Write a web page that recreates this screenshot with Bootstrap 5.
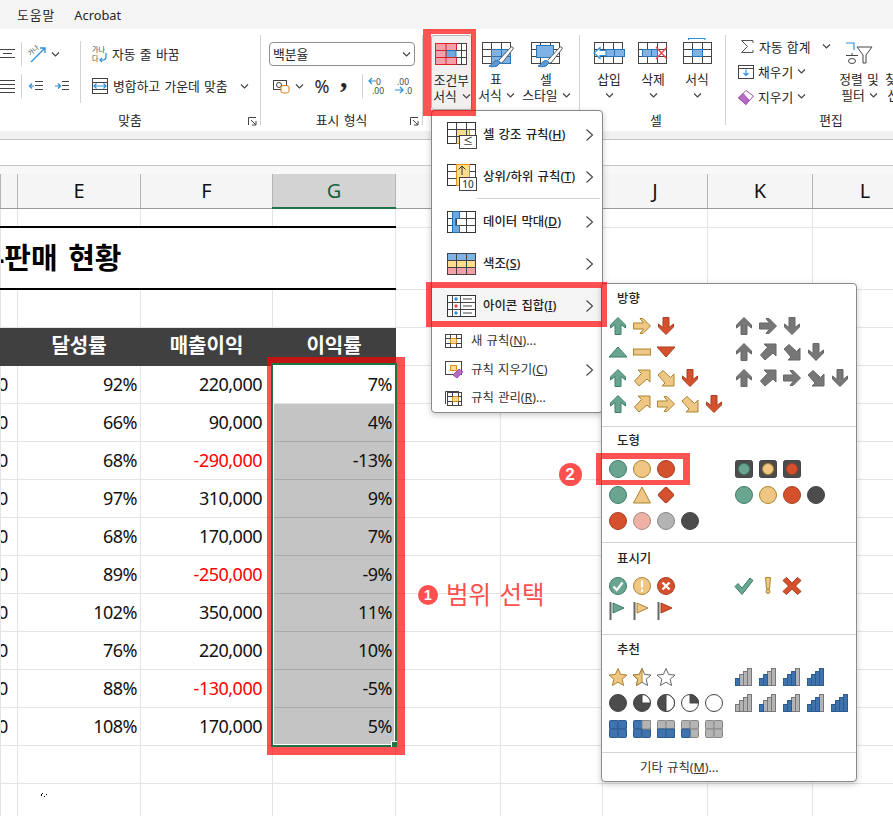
<!DOCTYPE html>
<html lang="ko">
<head>
<meta charset="utf-8">
<title>조건부 서식</title>
<link href="https://cdn.jsdelivr.net/npm/bootstrap@5.3.0/dist/css/bootstrap.min.css" rel="stylesheet">
<style>
html,body{margin:0;background:#fff}
body{font-family:"Noto Sans","Noto Sans CJK KR",sans-serif;font-size:12.8px;color:#262626;word-spacing:1px;line-height:16px}
.pg{width:893px;height:816px;overflow:hidden}
.defs{position:absolute;width:0;height:0}
svg{display:block;overflow:visible;flex:none}
.tabs{height:29px;background:#f5f5f5;padding-left:17px;gap:19px}
.tabk{letter-spacing:1px}
.rib{height:102px;background:#fff;padding-top:6px;overflow:hidden}
.rg{height:90px;border-right:1px solid #d2d2d2;flex:none}
.rg1{width:341px;margin-left:-80px;padding-left:80px}
.rg2{width:162px}.rg3{width:157px;padding-left:8px}.rg4{width:146px;padding-left:7px}.rg5{width:210px;border:0;padding-left:12px}
.rbody{flex:1 1 auto;min-height:0}
.rlab{height:13px;flex:none;padding-top:4px;box-sizing:content-box}
.lab5{width:210px;margin-left:-12px}
.lnch{right:3px;top:9px}
.lft{width:81px;border-right:1px solid #d2d2d2;height:62px;margin-top:6px;padding-bottom:4px;gap:6px}
.lrow{height:26px}
.cella{width:22px;height:24px;border-right:1px solid #d2d2d2;overflow:hidden}
.rgt{padding-left:11px;height:62px;margin-top:6px;gap:6px}
.big{height:75px;padding-top:3px;line-height:16px}
.bicon{height:33px}
.bw41{width:41px}.bw48{width:48px}.bw52{width:52px}.bw44{width:44px}.bw46{width:46px}
.cfb{background:#f0f0f0;border:1px solid #b5b5b5;border-radius:3px}
.chr{margin-left:5px}
.cg1{margin-left:6px}
.cg2{margin-left:5px}
.cg3{margin-left:7px}
.cg4{margin-left:12px}
.cg7{margin-left:13px}
.cg6{margin-left:6px}
.chd{margin-top:6px}
.ed1{width:98px;height:75px;flex:none;margin-top:-1px}
.edrow{height:25.5px}
.sig{margin:0 5px 0 3px}
.edi{margin-right:4px}
.combo{width:146px;height:24px;margin:7px 0 0 8px;border:1px solid #8f8f8f;border-radius:4px;padding:0 4px 0 3px}
.fmt{margin:4px 0 0 12px;height:32px}
.pct{font-size:18px;margin-left:7px;width:24px;text-align:center}
.cmm{font-size:30px;font-weight:700;width:16px;height:32px;line-height:14px;font-family:"Liberation Serif",serif;margin:0 6px}
.vsep{width:1px;height:24px;background:#d2d2d2;margin-right:6px}
.fbar{height:26px;background:#fff;border-bottom:1px solid #c8c8c8}
.fshade{height:9px;background:#f1f1f1;border-bottom:1px solid #c4c4c4}
.strip{height:8px;background:#f8f8f8}
.xl{table-layout:fixed;border-collapse:collapse;width:917px;font-size:18px;letter-spacing:-.5px;color:#111;word-spacing:0}
.cw17{width:17px}.cw123{width:123px}.cw132{width:132px}.cw105{width:105px}.cw102{width:102px}
.xl td{border:1px solid #e4e4e4;padding:0 3px;text-align:right;white-space:nowrap;overflow:hidden;line-height:20px}
.xl .pr10{padding-right:10px}
.xl .dc{padding:0;text-align:left;text-indent:-3px}
.xl .hd td{height:34px;background:#f5f5f5;text-align:center;border-color:#b5b5b5;border-top:0;border-bottom-color:#9c9c9c;font-size:20px;letter-spacing:0;padding:0}
.xl .hd .hsel{background:#d3d3d3;border-bottom:2px solid #217346;color:#17603a}
.xl .r19 td{height:19px}.xl .r62 td{height:62px}.xl .r38 td{height:38px}.xl .r33 td{height:33px}
.xl .ttl{border-top:2px solid #000!important;border-bottom:2px solid #000!important;text-align:left;font-size:29px;font-weight:700;padding:0;word-spacing:3px;letter-spacing:0;color:#000;text-indent:-6px}
.xl .dkc{background:#404040;border-color:#404040;color:#fff;font-weight:700;font-size:20px;letter-spacing:0;text-align:center}
.xl .gy{background:#c4c4c4;border-bottom-color:#a9a9a9}
.xl .neg{color:#f00}
.ov{position:absolute}
.selb{left:271px;top:363px;width:126px;height:384px;border:2px solid #217346;box-shadow:inset 0 0 0 1px #fff}
.hnd{right:-3px;bottom:-3px;width:7px;height:7px;background:#217346;border:1px solid #fff;position:absolute}
.rr{border-style:solid;border-color:rgba(255,0,0,.68);z-index:5}
.rr1{left:423px;top:29px;width:53px;height:87px;border-width:5px 5px 6px 8px}
.rr2{left:267px;top:357px;width:138px;height:398px;border-width:6px 8px 8px 5px}
.rr3{left:426px;top:282px;width:181px;height:45px;border-width:6px}
.rr4{left:596px;top:453px;width:94px;height:32px;border-width:6px 7px 5px 6px}
.num{border-radius:50%;background:#ff5050;color:#fff;font-weight:700;flex:none;font-family:"Liberation Sans",sans-serif}
.anno1{left:418px;top:579px;color:#ff5050;font-size:24.5px;line-height:32px;gap:8px;word-spacing:2px;z-index:3}
.n1{width:20px;height:20px;font-size:14px;line-height:20px}
.n2{left:558.5px;top:462.5px;width:23px;height:23px;font-size:17px;line-height:23px;z-index:3}
.m1{left:431px;top:110px;width:172px;height:303px;background:#fff;border:1px solid #8a8a8a;border-radius:4px;padding-top:3px;box-shadow:0 2px 6px rgba(0,0,0,.22);z-index:4;font-size:12.4px}
.mi{height:42px;padding-left:15px;font-weight:500;color:#222}
.mi .mic{width:36px}
.mon{background:#f5f5f5}
.mi.ms{height:28.5px;padding-left:13px;font-weight:400;color:#333}
.mi.ms .mic{width:26px}
.msep{height:1px;background:#d4d4d4;margin:0 2px 2px 45px}
.mch{margin-left:auto;margin-right:9px}
.mtxt u{text-underline-offset:1px}
.m2{left:601px;top:283px;width:256px;height:499px;background:#fff;border:1px solid #8a8a8a;border-radius:4px;box-shadow:0 2px 6px rgba(0,0,0,.22);z-index:4;font-size:12.4px}
.sec{border-bottom:1px solid #d4d4d4;padding-left:4px}
.s1{padding-bottom:9px}.s2{padding-bottom:8px}.s3{padding-bottom:12px}.s4{padding-bottom:11px}
.sh{padding-left:11px;font-weight:500;color:#222;height:28px;line-height:30px}
.sh1{height:29px}
.sh2{height:26px;line-height:28px}
.sh3{line-height:32px}
.ir{height:26px}.ir25{height:25px}.ir23{height:23px}
.mt1{margin-top:1px}.mt2{margin-top:2px}.mt3{margin-top:3px}
.ca{width:126px;flex:none}
.ii{width:18px;height:18px;margin:0 3px}
.ig{fill:#6aa590;stroke:#3f7d69}.iy{fill:#efc684;stroke:#a8862f}.ir2{fill:#d5502d;stroke:#a93f22}.ik{fill:#777;stroke:#666}.id{fill:#4c4c4c;stroke:#444}.ip{fill:#efb1a4;stroke:#a58a84}.il{fill:#b4b4b4;stroke:#888}.iw{fill:#fff;stroke:#666}.iwd{fill:#fff;stroke:#444}
.ft{height:29px;padding-left:38px;color:#333}
.dots{left:41px;top:793px}
</style>
</head>
<body>
<svg class="defs" aria-hidden="true"><defs>
<polygon id="au" points="9,.5 16.5,8 16.5,11 12,7.5 12,17.5 6,17.5 6,7.5 1.5,11 1.5,8"/>
<polygon id="ane" points="17,1 17,13 14,10 6,17 1.5,12 8.5,4.5 5,1"/>
<polygon id="tu" points="9,4 18,14 0,14"/>
<circle id="ci" cx="9" cy="9" r="8.5"/>
<polygon id="tri" points="9,1 17.5,17 .5,17"/>
<rect id="dia" x="3.2" y="3.2" width="11.6" height="11.6" rx="1.5" transform="rotate(45 9 9)"/>
<polygon id="st" points="9,.5 11.6,6.4 18,7 13.2,11.2 14.6,17.5 9,14.2 3.4,17.5 4.8,11.2 0,7 6.4,6.4"/>
<g id="ch"><path d="M0 .5 3.5 4 7 .5" fill="none" stroke="#444" stroke-width="1.2"/></g>
<g id="mc"><path d="M.5 .5 6.5 6 .5 11.5" fill="none" stroke="#444" stroke-width="1.1"/></g>
<g id="grid3" fill="none" stroke="#444"><rect x=".5" y="4.5" width="28" height="21"/><path d="M9.5 4.5v21M19.5 4.5v21M.5 11.5h28M.5 18.5h28"/></g>
<g id="brush"><path d="M10 27c-3 1-6 1-8 0 3-1 4-4 6-5 2-1 5 0 5 2l-3 3Z" fill="#5b9bd5" stroke="#2f6ea8"/><path d="M12 21 24 8c1-1 3 1 2 2L15 24" fill="#fff" stroke="#555"/></g>
<g id="b" stroke="#777"><rect x="12.5" y=".5" width="4" height="17"/><rect x="8.5" y="3.5" width="4" height="14"/><rect x="4.5" y="6.5" width="4" height="11"/><rect x=".5" y="10.5" width="4" height="7"/></g>
<g id="q"><rect x=".5" y=".5" width="8.5" height="8.5" rx="1"/><rect x="9" y=".5" width="8.5" height="8.5" rx="1"/><rect x=".5" y="9" width="8.5" height="8.5" rx="1"/><rect x="9" y="9" width="8.5" height="8.5" rx="1"/></g>
<g id="mg" fill="#fff" stroke="#333"><rect x=".5" y=".5" width="28" height="21"/></g>
</defs></svg>

<div class="pg position-relative">
  <div class="tabs d-flex align-items-center"><span class="tabk">도움말</span><span>Acrobat</span></div>

  <div class="rib d-flex">
    <!-- 맞춤 -->
    <div class="rg rg1 d-flex flex-column">
      <div class="rbody d-flex">
        <div class="lft d-flex flex-column">
          <div class="lrow d-flex align-items-center">
            <div class="cella d-flex align-items-center"><svg width="15" height="12"><path d="M0 1.5h15M3 5.5h9M0 9.5h15" stroke="#444"/></svg></div>
            <svg class="cg3" width="18" height="18"><text x="0" y="8" font-size="6.5" fill="#444" transform="rotate(-40 5 8)">가나</text><path d="M2 17 16 3M11 3h5v5" fill="none" stroke="#2a8fd8" stroke-width="1.3"/></svg>
            <svg class="cg2" width="7" height="5"><use href="#ch"/></svg>
          </div>
          <div class="lrow d-flex align-items-center">
            <div class="cella d-flex align-items-center"><svg width="15" height="14"><path d="M0 1.5h15M0 5.5h15M0 9.5h15M0 13.5h15" stroke="#444"/></svg></div>
            <svg class="cg3" width="14" height="12"><path d="M6 1.5h8M6 5.5h8M6 9.5h8" fill="none" stroke="#444"/><path d="M0 6h5M3 3.5 .5 6 3 8.5" fill="none" stroke="#2a8fd8" stroke-width="1.2"/></svg>
            <svg class="cg4" width="14" height="12"><path d="M7 1.5h7M7 5.5h7M7 9.5h7" fill="none" stroke="#444"/><path d="M0 6h5M3 3.5 5.5 6 3 8.5" fill="none" stroke="#2a8fd8" stroke-width="1.2"/></svg>
          </div>
        </div>
        <div class="rgt d-flex flex-column">
          <div class="lrow d-flex align-items-center gap-1">
            <svg width="16" height="18"><text x="0" y="7" font-size="7" fill="#444">가나</text><text x="0" y="16" font-size="7" fill="#444">다</text><path d="M14 8v4q0 3-3 3H8M10 13l-2 2 2 2" fill="none" stroke="#2a8fd8" stroke-width="1.2"/></svg>
            <span>자동 줄 바꿈</span>
          </div>
          <div class="lrow d-flex align-items-center">
            <svg width="16" height="16"><rect x=".5" y=".5" width="15" height="15" fill="#fff" stroke="#444"/><path d="M.5 4.5h15M.5 11.5h15" stroke="#444"/><path d="M2 8h12M4.5 5.5 2 8l2.5 2.5M11.5 5.5 14 8l-2.5 2.5" fill="none" stroke="#2a8fd8" stroke-width="1.2"/></svg>
            <span class="cg2">병합하고 가운데 맞춤</span>
            <svg class="cg7" width="7" height="5"><use href="#ch"/></svg>
          </div>
        </div>
      </div>
      <div class="rlab text-center position-relative">맞춤
        <svg class="ov lnch" width="9" height="9"><path d="M.5 8V.5H8M3 3l5 5M8 4v4H4" fill="none" stroke="#444"/></svg>
      </div>
    </div>

    <!-- 표시 형식 -->
    <div class="rg rg2 d-flex flex-column">
      <div class="rbody">
        <div class="combo d-flex align-items-center justify-content-between"><span>백분율</span><svg width="7" height="5"><use href="#ch"/></svg></div>
        <div class="fmt d-flex align-items-center">
          <svg width="17" height="14"><rect x=".5" y="1.5" width="13" height="9" fill="#fff" stroke="#444"/><circle cx="6" cy="6" r="2.5" fill="none" stroke="#444"/><ellipse cx="12" cy="8" rx="4" ry="1.5" fill="#fff" stroke="#e07a10"/><path d="M8 8v4.5c0 2 8 2 8 0V8" fill="#fff" stroke="#e07a10"/></svg>
          <svg class="cg1" width="7" height="5"><use href="#ch"/></svg>
          <span class="pct">%</span>
          <span class="cmm">,</span>
          <span class="vsep"></span>
          <svg width="20" height="18"><text x="7" y="8" font-size="8.5" fill="#444">0</text><text x="3" y="17" font-size="8.5" fill="#444">.00</text><path d="M0 4h7M3 1 0 4l3 3" fill="none" stroke="#2a8fd8" stroke-width="1.2"/></svg>
          <svg class="cg6" width="18" height="18"><text x="2" y="8" font-size="8.5" fill="#444">.00</text><text x="10" y="17" font-size="8.5" fill="#444">.0</text><path d="M0 13h8M5 10l3 3-3 3" fill="none" stroke="#2a8fd8" stroke-width="1.2"/></svg>
        </div>
      </div>
      <div class="rlab text-center position-relative">표시 형식
        <svg class="ov lnch" width="9" height="9"><path d="M.5 8V.5H8M3 3l5 5M8 4v4H4" fill="none" stroke="#444"/></svg>
      </div>
    </div>

    <!-- 스타일 -->
    <div class="rg rg3 d-flex">
      <div class="big cfb bw41 d-flex flex-column align-items-center">
        <svg class="bicon" width="32" height="33"><g transform="translate(-1 4)"><rect x=".5" y=".5" width="31" height="21" fill="#fff" stroke="#444"/><rect x=".5" y=".5" width="21" height="7" fill="#f4a0a8" stroke="#d8232a"/><rect x="11" y="7.5" width="10" height="7" fill="#6fa8dc" stroke="#2a74b8"/><rect x=".5" y="14.5" width="21" height="7" fill="#f4a0a8" stroke="#d8232a"/><path d="M.5 7.500v7h10.500v-7Z" fill="#f4a0a8" stroke="#d8232a"/><path d="M11 .5v7M11 14.500v7" stroke="#d8232a" fill="none"/><path d="M26.500 .5v21M21.500 7.500h10M21.500 14.500h10" stroke="#444"/></g></svg>
        <span>조건부</span>
        <span class="d-flex align-items-center">서식<svg class="cg1" width="7" height="5"><use href="#ch"/></svg></span>
      </div>
      <div class="big bw48 d-flex flex-column align-items-center">
        <svg class="bicon" width="30" height="33"><use href="#grid3" transform="translate(1 0)"/><rect x="10.500" y="11.5" width="19" height="14" fill="#7fb2e5" stroke="#2a74b8"/><path d="M20.500 11.5v14M10.500 18.5h19" stroke="#2a74b8"/><use href="#brush" transform="translate(6 1)"/></svg>
        <span>표</span>
        <span class="d-flex align-items-center">서식<svg class="chr" width="7" height="5"><use href="#ch"/></svg></span>
      </div>
      <div class="big bw52 d-flex flex-column align-items-center">
        <svg class="bicon" width="30" height="33"><use href="#grid3"/><rect x="5.5" y="7.5" width="17" height="12" fill="#7fb2e5" stroke="#2a74b8"/><use href="#brush" transform="translate(5 1)"/></svg>
        <span>셀</span>
        <span class="d-flex align-items-center">스타일<svg class="chr" width="7" height="5"><use href="#ch"/></svg></span>
      </div>
    </div>

    <!-- 셀 -->
    <div class="rg rg4 d-flex flex-column">
      <div class="rbody d-flex">
        <div class="big bw44 d-flex flex-column align-items-center">
          <svg class="bicon" width="32" height="33"><use href="#grid3" transform="translate(1 0)"/><rect x="12" y="11.5" width="19.5" height="7" fill="#7fb2e5" stroke="#2a74b8"/><path d="M21.5 11.5v7" stroke="#2a74b8"/><path d="M1 15 7 9.5v3h6v5H7v3Z" fill="#fff" stroke="#2a8fd8" stroke-width="1.2"/></svg>
          <span>삽입</span>
          <svg class="chd" width="7" height="5"><use href="#ch"/></svg>
        </div>
        <div class="big bw44 d-flex flex-column align-items-center">
          <svg class="bicon" width="30" height="33"><use href="#grid3"/><rect x="4.5" y="11.5" width="15" height="7" fill="#7fb2e5" stroke="#2a74b8"/><path d="M13.5 11.5v7" stroke="#2a74b8"/><path d="M18 9l11 12M29 9 18 21" stroke="#e8473f" stroke-width="1.3"/></svg>
          <span>삭제</span>
          <svg class="chd" width="7" height="5"><use href="#ch"/></svg>
        </div>
        <div class="big bw44 d-flex flex-column align-items-center">
          <svg class="bicon" width="30" height="33"><use href="#grid3" transform="translate(1 0)"/><rect x="10.5" y="11.5" width="10" height="7" fill="#7fb2e5" stroke="#2a74b8"/><path d="M6 .5h17M6.500 0v2M23 0v2" stroke="#2a8fd8" stroke-width="1.1" fill="none"/></svg>
          <span>서식</span>
          <svg class="chd" width="7" height="5"><use href="#ch"/></svg>
        </div>
      </div>
      <div class="rlab text-center">셀</div>
    </div>

    <!-- 편집 -->
    <div class="rg rg5 d-flex flex-column">
      <div class="rbody d-flex">
        <div class="ed1 d-flex flex-column">
          <div class="edrow d-flex align-items-center"><svg class="sig" width="13" height="13"><path d="M12 3V.5H.5L6.500 6.500.5 12.500H12V10" fill="none" stroke="#555"/></svg><span>자동 합계</span><svg class="cg7" width="7" height="5"><use href="#ch"/></svg></div>
          <div class="edrow d-flex align-items-center"><svg class="edi" width="16" height="14"><rect x=".5" y=".5" width="15" height="13" fill="#fff" stroke="#444"/><path d="M.5 3.500h15" stroke="#444"/><path d="M8 4.500v6M5.500 8 8 10.500 10.500 8" fill="none" stroke="#2a8fd8" stroke-width="1.2"/></svg><span>채우기</span><svg class="chr" width="7" height="5"><use href="#ch"/></svg></div>
          <div class="edrow d-flex align-items-center"><svg class="edi" width="16" height="16"><path d="M.5 9 8 1.500 15.500 7 8 15.500Z" fill="#fff" stroke="#a34fb5"/><path d="M.5 9 5 4.500 11 11 8 15.500Z" fill="#b56cc5" stroke="#a34fb5"/></svg><span>지우기</span><svg class="chr" width="7" height="5"><use href="#ch"/></svg></div>
        </div>
        <div class="big d-flex flex-column align-items-center flex-shrink-0 bw46">
          <svg class="bicon" width="28" height="33"><path d="M1 5h8v7" fill="none" stroke="#2a8fd8" stroke-width="1.2"/><path d="M1 17.500h12M7 15v3M3.500 23a3.500 2.500 0 1 0 7 0 3.500 2.500 0 1 0-7 0" fill="none" stroke="#444"/><path d="M12 9h15l-6 8v8h-3v-8Z" fill="#fff" stroke="#444"/></svg>
          <span>정렬 및</span>
          <span class="d-flex align-items-center">필터<svg class="chr" width="7" height="5"><use href="#ch"/></svg></span>
        </div>
        <div class="big d-flex flex-column align-items-center flex-shrink-0 bw46">
          <svg class="bicon" width="28" height="33"><path d="M6 24 9 20 12 24" fill="none" stroke="#555"/></svg>
          <span>찾기 및</span>
          <span class="d-flex align-items-center">선택<svg class="chr" width="7" height="5"><use href="#ch"/></svg></span>
        </div>
      </div>
      <div class="rlab text-center lab5">편집</div>
    </div>
  </div>

  <div class="fshade"></div>
  <div class="fbar"></div>
  <div class="strip"></div>

  <table class="xl">
    <colgroup><col class="cw17"><col class="cw123"><col class="cw132"><col class="cw123"><col class="cw105"><col class="cw102"><col class="cw105"><col class="cw105"><col class="cw105"></colgroup>
    <tr class="hd"><td></td><td>E</td><td>F</td><td class="hsel">G</td><td></td><td></td><td>J</td><td>K</td><td>L</td></tr>
    <tr class="r19"><td></td><td></td><td></td><td></td><td></td><td></td><td></td><td></td><td></td></tr>
    <tr class="r62"><td class="ttl" colspan="4">-판매 현황</td><td></td><td></td><td></td><td></td><td></td></tr>
    <tr class="r38"><td></td><td></td><td></td><td></td><td></td><td></td><td></td><td></td><td></td></tr>
    <tr class="r38"><td class="dkc"></td><td class="dkc">달성률</td><td class="dkc">매출이익</td><td class="dkc">이익률</td><td></td><td></td><td></td><td></td><td></td></tr>
    <tr class="r38"><td class="dc">0</td><td>92%</td><td class="pr10">220,000</td><td>7%</td><td></td><td></td><td></td><td></td><td></td></tr>
    <tr class="r38"><td class="dc">0</td><td>66%</td><td class="pr10">90,000</td><td class="gy">4%</td><td></td><td></td><td></td><td></td><td></td></tr>
    <tr class="r38"><td class="dc">0</td><td>68%</td><td class="pr10 neg">-290,000</td><td class="gy">-13%</td><td></td><td></td><td></td><td></td><td></td></tr>
    <tr class="r38"><td class="dc">0</td><td>97%</td><td class="pr10">310,000</td><td class="gy">9%</td><td></td><td></td><td></td><td></td><td></td></tr>
    <tr class="r38"><td class="dc">0</td><td>68%</td><td class="pr10">170,000</td><td class="gy">7%</td><td></td><td></td><td></td><td></td><td></td></tr>
    <tr class="r38"><td class="dc">0</td><td>89%</td><td class="pr10 neg">-250,000</td><td class="gy">-9%</td><td></td><td></td><td></td><td></td><td></td></tr>
    <tr class="r38"><td class="dc">0</td><td>102%</td><td class="pr10">350,000</td><td class="gy">11%</td><td></td><td></td><td></td><td></td><td></td></tr>
    <tr class="r38"><td class="dc">0</td><td>76%</td><td class="pr10">220,000</td><td class="gy">10%</td><td></td><td></td><td></td><td></td><td></td></tr>
    <tr class="r38"><td class="dc">0</td><td>88%</td><td class="pr10 neg">-130,000</td><td class="gy">-5%</td><td></td><td></td><td></td><td></td><td></td></tr>
    <tr class="r38"><td class="dc">0</td><td>108%</td><td class="pr10">170,000</td><td class="gy">5%</td><td></td><td></td><td></td><td></td><td></td></tr>
    <tr class="r38"><td></td><td></td><td></td><td></td><td></td><td></td><td></td><td></td><td></td></tr>
    <tr class="r33"><td></td><td></td><td></td><td></td><td></td><td></td><td></td><td></td><td></td></tr>
  </table>

  <!-- 선택 영역과 강조 -->
  <div class="ov selb"><span class="hnd"></span></div>
  <div class="ov rr rr1"></div>
  <div class="ov rr rr2"></div>
  <div class="ov anno1 d-flex align-items-center"><span class="num n1 text-center">1</span><span>범위 선택</span></div>
  <div class="ov num n2 text-center">2</div>
  <svg class="ov dots" width="6" height="5"><path d="M0 1h1v2H0zM1 0h1v1H1zM5 1h1v1H5zM3 3h1v1H3z" fill="#000"/></svg>

  <!-- 조건부 서식 메뉴 -->
  <div class="ov m1">
    <div class="mi d-flex align-items-center"><span class="mic"><svg width="30" height="27"><use href="#mg"/><rect x="9.500" y="7.500" width="13" height="14" fill="#ffdb8e" stroke="#e5921a"/><path d="M9.500 .5v21M19.500 .5v21M.5 7.500h28M.5 14.500h28" stroke="#444" fill="none"/><rect x="12.500" y="13.500" width="17" height="13" fill="#fff" stroke="#444"/><text x="21" y="23" font-size="10" text-anchor="middle" fill="#444">≤</text></svg></span><span class="mtxt">셀 강조 규칙(<u>H</u>)</span><svg class="mch" width="7" height="12"><use href="#mc"/></svg></div>
    <div class="mi d-flex align-items-center"><span class="mic"><svg width="30" height="27"><use href="#mg"/><rect x="9.500" y=".5" width="13" height="21" fill="#ffdb8e" stroke="#e5921a"/><path d="M.5 7.500h9M.5 14.500h9M22.500 7.500h6M22.500 14.500h6M28.500 .5v21" stroke="#444" fill="none"/><path d="M15 11V2M11.500 5.500 15 2l3.500 3.500" stroke="#333" fill="none"/><rect x="12.500" y="13.500" width="17" height="13" fill="#fff" stroke="#444"/><text x="21" y="24" font-size="10" text-anchor="middle" fill="#444">10</text></svg></span><span class="mtxt">상위/하위 규칙(<u>T</u>)</span><svg class="mch" width="7" height="12"><use href="#mc"/></svg></div>
    <div class="msep"></div>
    <div class="mi d-flex align-items-center"><span class="mic"><svg width="30" height="23"><use href="#mg"/><path d="M.5 7.500h28M.5 14.500h28M9.500 .5v21M19.500 .5v21" stroke="#444" fill="none"/><path d="M5.500 .5h7v7h-4v7h4v7h-7Z" fill="#6fa8dc" stroke="#1c6fb8"/></svg></span><span class="mtxt">데이터 막대(<u>D</u>)</span><svg class="mch" width="7" height="12"><use href="#mc"/></svg></div>
    <div class="mi d-flex align-items-center"><span class="mic"><svg width="30" height="23"><use href="#mg"/><rect x=".5" y=".5" width="28" height="7" fill="#7fb2e5"/><rect x=".5" y="7.500" width="28" height="7" fill="#ffdb8e"/><rect x=".5" y="14.500" width="28" height="7" fill="#f4a0a8"/><path d="M.5 7.500h28M.5 14.500h28M9.500 .5v21M19.500 .5v21" stroke="#444" fill="none"/><rect x=".5" y=".5" width="28" height="21" fill="none" stroke="#444"/></svg></span><span class="mtxt">색조(<u>S</u>)</span><svg class="mch" width="7" height="12"><use href="#mc"/></svg></div>
    <div class="mi mon d-flex align-items-center"><span class="mic"><svg width="30" height="23"><use href="#mg"/><path d="M.5 7.500h28M.5 14.500h28M5.500 .5v21M13.500 .5v21" stroke="#444" fill="none"/><path d="M16 4h9M16 11h9M16 18h9" stroke="#fff" stroke-width="3"/><path d="M16 4h9M16 11h9M16 18h9" stroke="#444"/><circle cx="9" cy="4" r="1.700" fill="#2a8fd8"/><circle cx="9" cy="11" r="1.700" fill="#e8473f"/><circle cx="9" cy="18" r="1.700" fill="#2a8fd8"/></svg></span><span class="mtxt">아이콘 집합(<u>I</u>)</span><svg class="mch" width="7" height="12"><use href="#mc"/></svg></div>
    <div class="mi ms d-flex align-items-center"><span class="mic"><svg width="17" height="14"><rect x=".5" y=".5" width="16" height="13" fill="#fff" stroke="#444"/><rect x="5.500" y="4.500" width="6" height="5" fill="#ffdb8e" stroke="#e5921a"/><path d="M.5 4.500h5M11.500 4.500h5M.5 9.500h5M11.500 9.500h5M5.500 .5v4M11.500 .5v4M5.500 9.500v4M11.500 9.500v4" stroke="#444"/></svg></span><span class="mtxt">새 규칙(<u>N</u>)...</span></div>
    <div class="mi ms d-flex align-items-center"><span class="mic"><svg width="20" height="17"><rect x=".5" y=".5" width="16" height="13" fill="#fff" stroke="#444"/><rect x="5.500" y="4.500" width="6" height="5" fill="#ffdb8e" stroke="#e5921a"/><path d="M8 14 14 8l4 3-6 6Z" fill="#b56cc5" stroke="#a34fb5"/></svg></span><span class="mtxt">규칙 지우기(<u>C</u>)</span><svg class="mch" width="7" height="12"><use href="#mc"/></svg></div>
    <div class="mi ms d-flex align-items-center"><span class="mic"><svg width="17" height="15"><rect x="2.500" y="1.500" width="14" height="13" fill="#fff" stroke="#444"/><path d="M.5 13V.5H14" fill="none" stroke="#444"/><rect x="7.500" y="5.500" width="6" height="5" fill="#ffdb8e" stroke="#e5921a"/><path d="M2.500 5.500h5M13.500 5.500h3M2.500 10.500h5M13.500 10.500h3M7.500 1.500v4M13.500 1.500v4M7.500 10.500v4M13.500 10.500v4" stroke="#444"/></svg></span><span class="mtxt">규칙 관리(<u>R</u>)...</span></div>
  </div>
  <div class="ov rr rr3"></div>

  <!-- 아이콘 집합 메뉴 -->
  <div class="ov m2">
    <div class="sec s1">
      <div class="sh sh1">방향</div>
      <div class="ir d-flex align-items-center"><div class="ca d-flex">
        <svg class="ii ig"><use href="#au"/></svg><svg class="ii iy"><use href="#au" transform="rotate(90 9 9)"/></svg><svg class="ii ir2"><use href="#au" transform="rotate(180 9 9)"/></svg></div><div class="d-flex">
        <svg class="ii ik"><use href="#au"/></svg><svg class="ii ik"><use href="#au" transform="rotate(90 9 9)"/></svg><svg class="ii ik"><use href="#au" transform="rotate(180 9 9)"/></svg></div></div>
      <div class="ir d-flex align-items-center"><div class="ca d-flex">
        <svg class="ii ig"><use href="#tu"/></svg><svg class="ii iy"><rect x=".5" y="6" width="17" height="6"/></svg><svg class="ii ir2"><use href="#tu" transform="rotate(180 9 9)"/></svg></div><div class="d-flex">
        <svg class="ii ik"><use href="#au"/></svg><svg class="ii ik"><use href="#ane"/></svg><svg class="ii ik"><use href="#ane" transform="rotate(90 9 9)"/></svg><svg class="ii ik"><use href="#au" transform="rotate(180 9 9)"/></svg></div></div>
      <div class="ir d-flex align-items-center"><div class="ca d-flex">
        <svg class="ii ig"><use href="#au"/></svg><svg class="ii iy"><use href="#ane"/></svg><svg class="ii iy"><use href="#ane" transform="rotate(90 9 9)"/></svg><svg class="ii ir2"><use href="#au" transform="rotate(180 9 9)"/></svg></div><div class="d-flex">
        <svg class="ii ik"><use href="#au"/></svg><svg class="ii ik"><use href="#ane"/></svg><svg class="ii ik"><use href="#au" transform="rotate(90 9 9)"/></svg><svg class="ii ik"><use href="#ane" transform="rotate(90 9 9)"/></svg><svg class="ii ik"><use href="#au" transform="rotate(180 9 9)"/></svg></div></div>
      <div class="ir d-flex align-items-center"><div class="ca d-flex">
        <svg class="ii ig"><use href="#au"/></svg><svg class="ii iy"><use href="#ane"/></svg><svg class="ii iy"><use href="#au" transform="rotate(90 9 9)"/></svg><svg class="ii iy"><use href="#ane" transform="rotate(90 9 9)"/></svg><svg class="ii ir2"><use href="#au" transform="rotate(180 9 9)"/></svg></div></div>
    </div>
    <div class="sec s2">
      <div class="sh sh2">도형</div>
      <div class="ir d-flex align-items-center mt3"><div class="ca d-flex">
        <svg class="ii ig"><use href="#ci"/></svg><svg class="ii iy"><use href="#ci"/></svg><svg class="ii ir2"><use href="#ci"/></svg></div><div class="d-flex">
        <svg class="ii id"><rect x=".5" y=".5" width="17" height="17" rx="2"/><circle class="ig" cx="9" cy="9" r="5.500"/></svg><svg class="ii id"><rect x=".5" y=".5" width="17" height="17" rx="2"/><circle class="iy" cx="9" cy="9" r="5.500"/></svg><svg class="ii id"><rect x=".5" y=".5" width="17" height="17" rx="2"/><circle class="ir2" cx="9" cy="9" r="5.500"/></svg></div></div>
      <div class="ir d-flex align-items-center"><div class="ca d-flex">
        <svg class="ii ig"><use href="#ci"/></svg><svg class="ii iy"><use href="#tri"/></svg><svg class="ii ir2"><use href="#dia"/></svg></div><div class="d-flex">
        <svg class="ii ig"><use href="#ci"/></svg><svg class="ii iy"><use href="#ci"/></svg><svg class="ii ir2"><use href="#ci"/></svg><svg class="ii id"><use href="#ci"/></svg></div></div>
      <div class="ir d-flex align-items-center"><div class="ca d-flex">
        <svg class="ii ir2"><use href="#ci"/></svg><svg class="ii ip"><use href="#ci"/></svg><svg class="ii il"><use href="#ci"/></svg><svg class="ii id"><use href="#ci"/></svg></div></div>
    </div>
    <div class="sec s3">
      <div class="sh sh3">표시기</div>
      <div class="ir d-flex align-items-center mt2"><div class="ca d-flex">
        <svg class="ii ig"><use href="#ci"/><path d="M4.500 9.500 7.800 13 13.500 5.500" fill="none" stroke="#fff" stroke-width="2.200"/></svg><svg class="ii iy"><use href="#ci"/><path d="M9 3.500v7M9 12.500v2.200" fill="none" stroke="#fff" stroke-width="2.200"/></svg><svg class="ii ir2"><use href="#ci"/><path d="M5.500 5.500l7 7M12.500 5.500l-7 7" fill="none" stroke="#fff" stroke-width="2.400"/></svg></div><div class="d-flex">
        <svg class="ii ig"><polygon points="0,9.500 3,6.500 7,11 15,1 18,3.500 7,17.500"/></svg><svg class="ii iy"><path d="M6.500 .5h5l-1 11.500h-3ZM7 14.500a2 2 0 1 0 4 0 2 2 0 1 0-4 0"/></svg><svg class="ii ir2"><polygon points="0,3.500 3.500,.5 9,6 14.500,.5 18,3.500 12.500,9 18,14.500 14.500,17.500 9,12 3.500,17.500 0,14.500 5.500,9"/></svg></div></div>
      <div class="ir23 d-flex align-items-center"><div class="ca d-flex">
        <svg class="ii ig"><path d="M1.500 0v18" stroke="#666" stroke-width="2" fill="none"/><polygon points="4,1 15,6 4,11"/></svg><svg class="ii iy"><path d="M1.500 0v18" stroke="#666" stroke-width="2" fill="none"/><polygon points="4,1 15,6 4,11"/></svg><svg class="ii ir2"><path d="M1.500 0v18" stroke="#666" stroke-width="2" fill="none"/><polygon points="4,1 15,6 4,11"/></svg></div></div>
    </div>
    <div class="sec s4">
      <div class="sh">추천</div>
      <div class="ir d-flex align-items-center mt1"><div class="ca d-flex">
        <svg class="ii iy"><use href="#st"/></svg><svg class="ii iw"><use href="#st"/><polygon class="iy" stroke="none" points="9,.5 9,14.2 3.4,17.5 4.8,11.2 0,7 6.4,6.4"/></svg><svg class="ii iw"><use href="#st"/></svg></div><div class="d-flex">
        <svg class="ii"><use href="#b" fill="#b4b4b4"/><rect x=".5" y="10.500" width="4" height="7" fill="#3f73ae" stroke="#2c5a90"/></svg><svg class="ii"><use href="#b" fill="#b4b4b4"/><path d="M.5 10.500h4v7h-4ZM4.500 6.500h4v11h-4Z" fill="#3f73ae" stroke="#2c5a90"/></svg><svg class="ii"><use href="#b" fill="#b4b4b4"/><path d="M.5 10.500h4v7h-4ZM4.500 6.500h4v11h-4ZM8.500 3.500h4v14h-4Z" fill="#3f73ae" stroke="#2c5a90"/></svg><svg class="ii"><use href="#b" fill="#3f73ae"/><path d="M.5 10.500h4v7h-4ZM4.500 6.500h4v11h-4ZM8.500 3.500h4v14h-4ZM12.500 .5h4v17h-4Z" fill="#3f73ae" stroke="#2c5a90"/></svg></div></div>
      <div class="ir d-flex align-items-center"><div class="ca d-flex">
        <svg class="ii id"><use href="#ci"/></svg><svg class="ii id"><use href="#ci"/><path d="M9 9V.5A8.500 8.500 0 0 1 17.500 9Z" fill="#fff"/></svg><svg class="ii id"><use href="#ci"/><path d="M9 .5A8.500 8.500 0 0 1 9 17.500Z" fill="#fff"/></svg><svg class="ii iwd"><use href="#ci"/><path d="M9 9V.5A8.500 8.500 0 0 1 17.500 9Z" fill="#4c4c4c"/></svg><svg class="ii iwd"><use href="#ci"/></svg></div><div class="d-flex">
        <svg class="ii"><use href="#b" fill="#b4b4b4"/></svg><svg class="ii"><use href="#b" fill="#b4b4b4"/><rect x=".5" y="10.500" width="4" height="7" fill="#3f73ae" stroke="#2c5a90"/></svg><svg class="ii"><use href="#b" fill="#b4b4b4"/><path d="M.5 10.500h4v7h-4ZM4.500 6.500h4v11h-4Z" fill="#3f73ae" stroke="#2c5a90"/></svg><svg class="ii"><use href="#b" fill="#b4b4b4"/><path d="M.5 10.500h4v7h-4ZM4.500 6.500h4v11h-4ZM8.500 3.500h4v14h-4Z" fill="#3f73ae" stroke="#2c5a90"/></svg><svg class="ii"><use href="#b" fill="#b4b4b4"/><path d="M.5 10.500h4v7h-4ZM4.500 6.500h4v11h-4ZM8.500 3.500h4v14h-4ZM12.500 .5h4v17h-4Z" fill="#3f73ae" stroke="#2c5a90"/></svg></div></div>
      <div class="ir25 d-flex align-items-center"><div class="ca d-flex">
        <svg class="ii" fill="#3f73ae" stroke="#2c5a90"><use href="#q"/></svg><svg class="ii" fill="#3f73ae" stroke="#2c5a90"><use href="#q"/><rect x="9" y=".5" width="8.500" height="8.500" rx="1" fill="#b4b4b4" stroke="#888"/></svg><svg class="ii" fill="#b4b4b4" stroke="#888"><use href="#q"/><path d="M.5 9h17v8.500H.5ZM9 9v8.500" fill="#3f73ae" stroke="#2c5a90"/></svg><svg class="ii" fill="#b4b4b4" stroke="#888"><use href="#q"/><rect x=".5" y="9" width="8.500" height="8.500" rx="1" fill="#3f73ae" stroke="#2c5a90"/></svg><svg class="ii" fill="#b4b4b4" stroke="#888"><use href="#q"/></svg></div></div>
    </div>
    <div class="ft d-flex align-items-center"><span class="mtxt">기타 규칙(<u>M</u>)...</span></div>
  </div>
  <div class="ov rr rr4"></div>
</div>
<script src="https://cdn.jsdelivr.net/npm/bootstrap@5.3.0/dist/js/bootstrap.bundle.min.js"></script>
</body>
</html>
